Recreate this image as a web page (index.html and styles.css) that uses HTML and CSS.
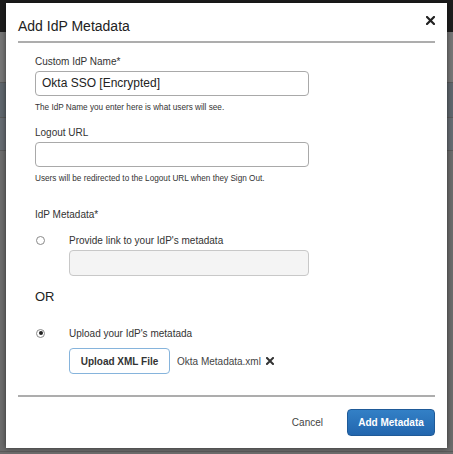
FILE: index.html
```html
<!DOCTYPE html>
<html>
<head>
<meta charset="utf-8">
<link rel="stylesheet" href="styles.css">
</head>
<body>
<div class="page">
  <div class="topbar"></div>
  <div class="band band-a"></div>
  <div class="band band-b"></div>
  <div class="band band-c"></div>
  <div class="band band-d"></div>
</div>

<div class="modal">
  <div class="modal-header">
    <h1 class="modal-title">Add IdP Metadata</h1>
    <span class="close">
      <svg width="9" height="9" viewBox="0 0 9 9"><path d="M1 1 L8 8 M8 1 L1 8" stroke="#222" stroke-width="2.2" stroke-linecap="square"/></svg>
    </span>
  </div>

  <div class="modal-body">
    <div class="field">
      <label class="label">Custom IdP Name*</label>
      <div class="input">Okta SSO [Encrypted]</div>
      <p class="help">The IdP Name you enter here is what users will see.</p>
    </div>

    <div class="field field-second">
      <label class="label">Logout URL</label>
      <div class="input"></div>
      <p class="help">Users will be redirected to the Logout URL when they Sign Out.</p>
    </div>

    <div class="label label-meta">IdP Metadata*</div>

    <div class="radio-row">
      <span class="radio"></span>
      <span class="radio-text">Provide link to your IdP's metadata</span>
    </div>
    <div class="input input-disabled"></div>

    <div class="or">OR</div>

    <div class="radio-row radio-row-2">
      <span class="radio radio-checked"></span>
      <span class="radio-text">Upload your IdP's metatada</span>
    </div>
    <div class="upload-row">
      <span class="upload-btn">Upload XML File</span>
      <span class="file-name">Okta Metadata.xml</span>
      <svg class="file-remove" width="8" height="8" viewBox="0 0 8 8"><path d="M1 1 L7 7 M7 1 L1 7" stroke="#333" stroke-width="2" stroke-linecap="square"/></svg>
    </div>
  </div>

  <div class="modal-footer">
    <span class="cancel">Cancel</span>
    <span class="primary">Add Metadata</span>
  </div>
</div>
</body>
</html>
```

FILE: styles.css
```css
html, body {
  margin: 0;
  padding: 0;
}

body {
  width: 453px;
  height: 454px;
  overflow: hidden;
  background: #6c6c6c;
  font-family: "Liberation Sans", Arial, sans-serif;
  position: relative;
}

.page {
  display: flex;
  flex-direction: column;
}

.topbar {
  height: 32px;
  background: #1d1d1d;
}

.band {
  border-bottom: 1px solid #5a5a5a;
}

.band-a {
  height: 50px;
  background: #767676;
}

.band-b {
  height: 34px;
  background: #5f666d;
}

.band-c {
  height: 32px;
  background: #666c72;
}

.band-d {
  height: 300px;
  background: #6c6c6c;
}

.modal {
  position: absolute;
  left: 6px;
  top: 3px;
  width: 441px;
  height: 445px;
  background: #fff;
  box-shadow: 0 0 5px rgba(0, 0, 0, 0.55);
  display: flex;
  flex-direction: column;
  box-sizing: border-box;
}

.modal-header {
  margin: 0 12px;
  padding-top: 7px;
  height: 31px;
  display: flex;
  justify-content: space-between;
  align-items: center;
  border-bottom: 2px solid #adadad;
}

.modal-title {
  margin: 0;
  font-size: 14px;
  font-weight: normal;
  color: #222;
  line-height: 20px;
}

.close {
  align-self: flex-start;
  margin-top: 6px;
  display: flex;
}

.modal-body {
  flex: 1;
  padding: 12px 0 0 29px;
  display: flex;
  flex-direction: column;
  align-items: flex-start;
}

.field {
  display: flex;
  flex-direction: column;
  align-items: flex-start;
}

.field-second {
  margin-top: 12px;
}

.label {
  font-size: 10px;
  line-height: 14px;
  color: #333;
  margin-bottom: 2px;
}

.input {
  width: 274px;
  height: 25px;
  box-sizing: border-box;
  border: 1px solid #a9a9a9;
  border-radius: 4px;
  background: #fff;
  padding: 0 6px;
  font-size: 12px;
  line-height: 23px;
  color: #222;
}

.help {
  margin: 6px 0 0;
  font-size: 8.2px;
  line-height: 12px;
  color: #333;
}

.label-meta {
  margin-top: 23px;
  margin-bottom: 0;
}

.radio-row {
  display: flex;
  align-items: center;
  height: 14px;
  margin-top: 11px;
}

.radio-row-2 {
  margin-top: 21px;
}

.radio {
  width: 9px;
  height: 9px;
  box-sizing: border-box;
  border: 1px solid #8a8a8a;
  border-radius: 50%;
  background: #fff;
  margin-left: 1px;
  margin-right: 24px;
  display: flex;
  align-items: center;
  justify-content: center;
}

.radio-checked::after {
  content: "";
  width: 4px;
  height: 4px;
  border-radius: 50%;
  background: #222;
}

.radio-text {
  font-size: 10px;
  color: #333;
}

.input-disabled {
  width: 240px;
  height: 26px;
  margin-left: 34px;
  margin-top: 3px;
  background: #f4f4f4;
  border-color: #c8c8c8;
}

.or {
  margin-top: 13px;
  font-size: 13px;
  line-height: 16px;
  color: #222;
}

.upload-row {
  margin-top: 8px;
  margin-left: 34px;
  display: flex;
  align-items: center;
}

.upload-btn {
  width: 101px;
  height: 26px;
  box-sizing: border-box;
  border: 1px solid #86b4dc;
  border-radius: 4px;
  font-size: 10px;
  font-weight: bold;
  color: #333;
  display: flex;
  align-items: center;
  justify-content: center;
}

.file-name {
  margin-left: 7px;
  font-size: 10px;
  color: #444;
}

.file-remove {
  margin-left: 5px;
}

.modal-footer {
  margin: 0 12px;
  border-top: 2px solid #adadad;
  padding: 12px 0 12px;
  display: flex;
  justify-content: flex-end;
  align-items: center;
}

.cancel {
  font-size: 10px;
  color: #444;
  margin-right: 24px;
}

.primary {
  width: 88px;
  height: 27px;
  box-sizing: border-box;
  border: 1px solid #1f5a98;
  border-radius: 4px;
  background: linear-gradient(#3380c6, #2266ae);
  color: #fff;
  font-size: 10px;
  font-weight: bold;
  display: flex;
  align-items: center;
  justify-content: center;
}
```
